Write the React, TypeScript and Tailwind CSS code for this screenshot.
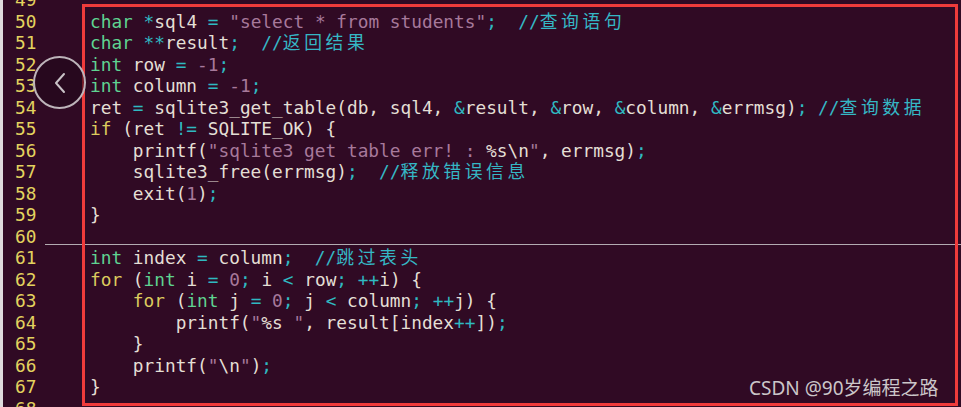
type Tok = [string, string];

const C = {
  p: "text-[#e4dfd5]",
  t: "text-[#5fd391]",
  k: "text-[#dccb5e]",
  o: "text-[#2fb9c1]",
  s: "text-[#a7799b]",
  c: "text-[#35b7c5]",
};

// one entry per source line, split into coloured tokens
const lines: { n: number; toks: Tok[] }[] = [
  { n: 49, toks: [] },
  {
    n: 50,
    toks: [
      ["t", "char"], ["p", " "], ["o", "*"], ["p", "sql4 "], ["o", "="], ["p", " "],
      ["s", "\"select * from students\""], ["o", ";"], ["p", "  "], ["c", "//"], ["z", "查询语句"],
    ],
  },
  {
    n: 51,
    toks: [["t", "char"], ["p", " "], ["o", "**"], ["p", "result"], ["o", ";"], ["p", "  "], ["c", "//"], ["z", "返回结果"]],
  },
  { n: 52, toks: [["t", "int"], ["p", " row "], ["o", "="], ["p", " "], ["s", "-1"], ["o", ";"]] },
  { n: 53, toks: [["t", "int"], ["p", " column "], ["o", "="], ["p", " "], ["s", "-1"], ["o", ";"]] },
  {
    n: 54,
    toks: [
      ["p", "ret "], ["o", "="], ["p", " sqlite3_get_table(db, sql4, "], ["o", "&"], ["p", "result, "],
      ["o", "&"], ["p", "row, "], ["o", "&"], ["p", "column, "], ["o", "&"], ["p", "errmsg)"], ["o", ";"],
      ["p", " "], ["c", "//"], ["z", "查询数据"],
    ],
  },
  { n: 55, toks: [["k", "if"], ["p", " (ret "], ["o", "!="], ["p", " SQLITE_OK) {"]] },
  {
    n: 56,
    toks: [
      ["p", "    printf("], ["s", "\"sqlite3 get table err! : "], ["p", "%s\\n"], ["s", "\""], ["p", ", errmsg)"], ["o", ";"],
    ],
  },
  { n: 57, toks: [["p", "    sqlite3_free(errmsg)"], ["o", ";"], ["p", "  "], ["c", "//"], ["z", "释放错误信息"]] },
  { n: 58, toks: [["p", "    exit("], ["s", "1"], ["p", ")"], ["o", ";"]] },
  { n: 59, toks: [["p", "}"]] },
  { n: 60, toks: [] },
  { n: 61, toks: [["t", "int"], ["p", " index "], ["o", "="], ["p", " column"], ["o", ";"], ["p", "  "], ["c", "//"], ["z", "跳过表头"]] },
  {
    n: 62,
    toks: [
      ["k", "for"], ["p", " ("], ["t", "int"], ["p", " i "], ["o", "="], ["p", " "], ["s", "0"], ["o", ";"],
      ["p", " i "], ["o", "<"], ["p", " row"], ["o", ";"], ["p", " "], ["o", "++"], ["p", "i) {"],
    ],
  },
  {
    n: 63,
    toks: [
      ["p", "    "], ["k", "for"], ["p", " ("], ["t", "int"], ["p", " j "], ["o", "="], ["p", " "], ["s", "0"], ["o", ";"],
      ["p", " j "], ["o", "<"], ["p", " column"], ["o", ";"], ["p", " "], ["o", "++"], ["p", "j) {"],
    ],
  },
  {
    n: 64,
    toks: [
      ["p", "        printf("], ["s", "\""], ["p", "%s"], ["s", " \""], ["p", ", result[index"], ["o", "++"], ["p", "])"], ["o", ";"],
    ],
  },
  { n: 65, toks: [["p", "    }"]] },
  { n: 66, toks: [["p", "    printf("], ["s", "\""], ["p", "\\n"], ["s", "\""], ["p", ")"], ["o", ";"]] },
  { n: 67, toks: [["p", "}"]] },
  { n: 68, toks: [] },
];

function Token({ kind, text }: { kind: string; text: string }) {
  if (kind === "z") {
    return <span className="text-[#35b7c5] tracking-[3.6px]">{text}</span>;
  }
  return <span className={C[kind as keyof typeof C]}>{text}</span>;
}

export default function App() {
  return (
    <div className="relative w-[961px] h-[407px] overflow-hidden flex bg-[#300a24]">
      <div className="w-[3px] h-full bg-[#dedbdd] shrink-0" />
      <div
        className="flex-1 flex flex-col mt-[-10.75px] text-[17.8px] leading-[21.5px] whitespace-pre"
        style={{ fontFamily: '"DejaVu Sans Mono", "Noto Sans CJK SC", monospace' }}
      >
        {lines.map((l) => (
          <div key={l.n} className="flex h-[21.5px] items-start shrink-0">
            <div className="w-[42px] pl-[12px] text-[#e3d35f] shrink-0">{l.n}</div>
            <div
              className={
                l.n === 60
                  ? "flex-1 h-[19px] border-b border-[#b3abb1] pl-[45px]"
                  : "flex-1 pl-[45px]"
              }
            >
              {l.toks.map((t, i) => (
                <Token key={i} kind={t[0]} text={t[1]} />
              ))}
            </div>
          </div>
        ))}
      </div>

      {/* red annotation box */}
      <div className="absolute left-[82px] top-[4px] w-[876px] h-[402px] border-[3px] border-[#f03b3b]" />

      {/* slider arrow */}
      <div className="absolute left-[33px] top-[56px] w-[53px] h-[53px] rounded-full border-2 border-[#bdb4ba] bg-[#22061a]/60 flex items-center justify-center">
        <svg width="14" height="22" viewBox="0 0 14 22" fill="none">
          <path d="M11 2 L3 11 L11 20" stroke="#c9c2c7" strokeWidth="2" strokeLinecap="round" strokeLinejoin="round" />
        </svg>
      </div>

      {/* watermark */}
      <div
        className="absolute left-[749px] top-[377px] text-[19px] leading-[22px] text-[#cbc6c9]"
        style={{ fontFamily: '"Noto Sans", "Noto Sans CJK SC", sans-serif' }}
      >
        CSDN @90岁编程之路
      </div>
    </div>
  );
}
